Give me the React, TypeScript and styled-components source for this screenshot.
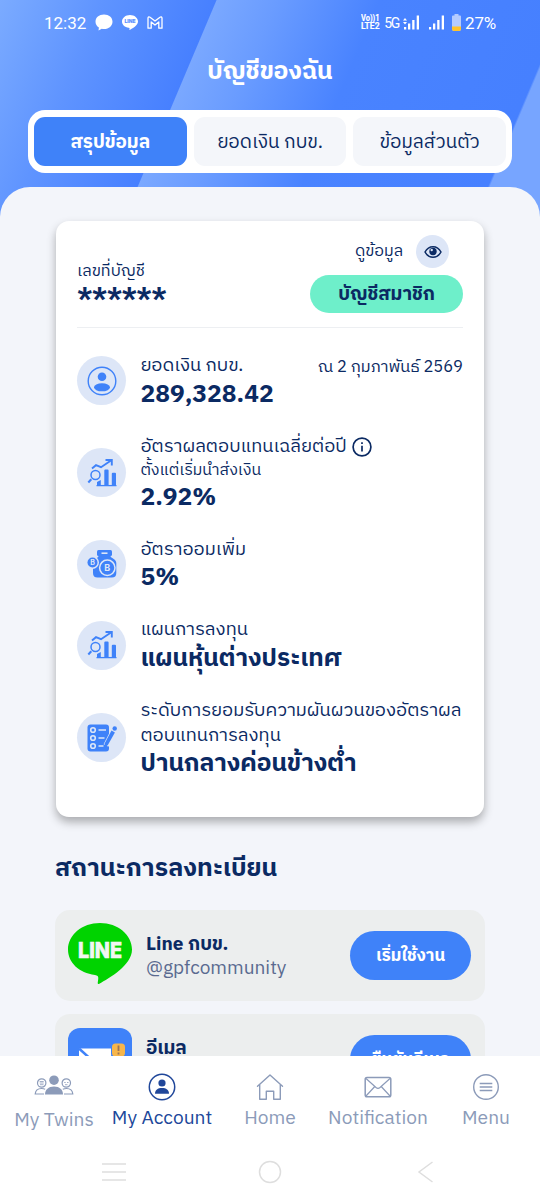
import React from 'react';
import styled, { createGlobalStyle } from 'styled-components';

const navy = '#0b2a63';
const blue = '#3f82f9';
const grey = '#8c9bb9';
const pale = '#dde6f7';

const Global = createGlobalStyle`
  * { box-sizing: border-box; }
  body { margin: 0; background: #f3f5fa; }
`;

const Screen = styled.main`
  width: 540px;
  height: 1199px;
  overflow: hidden;
  display: flex;
  flex-direction: column;
  font-family: 'IBM Plex Sans Thai', 'Noto Sans', 'Noto Sans Thai', sans-serif;
  color: ${navy};
  background: linear-gradient(112.9deg, #7babff 0, #5f94ff 95px, #4780ff 199px, #7aa8ff 200px, #6a9cff 255px, #4983ff 350px, #4680ff 522px, #77a5ff 524px, #77a5ff 100%) 0 0 / 540px 217px no-repeat;
`;

const Text = styled.span<{ $size: number; $line?: number; $weight?: number; $spacing?: number; $color?: string }>`
  display: block;
  white-space: nowrap;
  font-size: ${p => p.$size}px;
  line-height: ${p => p.$line ?? 24}px;
  font-weight: ${p => p.$weight ?? 400};
  letter-spacing: ${p => p.$spacing ?? 0}px;
  color: ${p => p.$color ?? 'inherit'};
`;

const StatusBar = styled.div`
  height: 44px;
  flex: none;
  padding: 0 44px 0;
  display: flex;
  align-items: center;
  justify-content: space-between;
`;
const StatusGroup = styled.div<{ $gap: number }>`
  display: flex;
  align-items: center;
  gap: ${p => p.$gap}px;
`;
const StatusText = styled(Text)`
  font-family: Roboto, sans-serif;
  padding-top: 1px;
`;
const Title = styled.header`
  height: 66px;
  flex: none;
  display: flex;
  justify-content: center;
  padding-top: 16px;
`;
const Tabs = styled.nav`
  flex: none;
  margin: 0 28px;
  height: 63px;
  padding: 7px 6px;
  display: grid;
  grid-template-columns: repeat(3, 1fr);
  gap: 7px;
  background: #fff;
  border-radius: 17px;
`;
const Tab = styled.button<{ $active?: boolean }>`
  border: 0;
  padding: 2px 0 0;
  font-family: inherit;
  display: flex;
  align-items: center;
  justify-content: center;
  border-radius: 11px;
  color: ${p => (p.$active ? '#fff' : navy)};
  background: ${p => (p.$active ? blue : '#f4f6fa')};
`;
const Sheet = styled.section`
  flex: 1;
  min-height: 0;
  overflow: hidden;
  margin-top: 14px;
  padding: 34px 56px 0;
  border-radius: 30px 30px 0 0;
  background: #f3f5fa;
`;
const Card = styled.article`
  height: 596px;
  padding: 14px 21px 0;
  border-radius: 13px;
  background: #fff;
  box-shadow: 0 5px 10px rgba(0, 0, 0, 0.3);
`;
const CardHead = styled.div`
  height: 93px;
  display: flex;
  justify-content: space-between;
  border-bottom: 1px solid #edeff2;
`;
const Account = styled.div`
  padding-top: 25px;
`;
const HeadRight = styled.div`
  display: flex;
  flex-direction: column;
  align-items: flex-end;
  gap: 7px;
`;
const Reveal = styled.div`
  display: flex;
  align-items: center;
  gap: 13px;
  padding-right: 14px;
`;
const Circle = styled.div<{ $size: number; $lift?: number }>`
  flex: none;
  width: ${p => p.$size}px;
  height: ${p => p.$size}px;
  margin-bottom: ${p => p.$lift ?? 0}px;
  border-radius: 50%;
  color: ${blue};
  background: ${pale};
  display: flex;
  align-items: center;
  justify-content: center;
`;
const Pill = styled.div`
  width: 153px;
  height: 38px;
  padding-top: 2px;
  border-radius: 19px;
  display: flex;
  align-items: center;
  justify-content: center;
  background: #6eefca;
`;
const Items = styled.div`
  display: flex;
  flex-direction: column;
  gap: 24.2px;
  padding-top: 26.4px;
`;
const Item = styled.div`
  display: flex;
  align-items: center;
  gap: 14.4px;
`;
const ItemText = styled.div`
  flex: 1;
`;
const Line = styled.div`
  display: flex;
  justify-content: space-between;
  align-items: center;
`;
const DateText = styled(Text)`
  padding-top: 1px;
  margin-bottom: -1px;
`;
const WithInfo = styled.div`
  display: flex;
  align-items: center;
  gap: 5px;
`;
const Heading = styled.h2`
  margin: 36px 0 25px -1px;
`;
const Service = styled.div`
  height: 91px;
  margin: 0 -1px 13px;
  padding: 0 14px 0 13px;
  display: flex;
  align-items: center;
  border-radius: 15px;
  background: #eceeee;
`;
const Logo = styled.div<{ $lift: number }>`
  display: flex;
  margin-bottom: ${p => p.$lift}px;
`;
const ServiceText = styled.div`
  flex: 1;
  margin-left: 14px;
  padding-top: 2px;
`;
const Action = styled.button`
  width: 121px;
  height: 49px;
  border: 0;
  padding: 0;
  border-radius: 25px;
  background: ${blue};
  font-family: inherit;
  display: flex;
  align-items: center;
  justify-content: center;
`;
const BottomNav = styled.nav`
  flex: none;
  height: 88px;
  background: #fff;
  display: grid;
  grid-template-columns: repeat(5, 1fr);
  padding-top: 17px;
`;
const NavItem = styled.div<{ $active?: boolean; $drop?: number }>`
  display: flex;
  flex-direction: column;
  align-items: center;
  gap: ${p => 6 + (p.$drop ?? 0)}px;
  color: ${p => (p.$active ? '#20479a' : grey)};
`;
const SystemNav = styled.div`
  flex: none;
  height: 55px;
  background: #fff;
  display: grid;
  grid-template-columns: 1fr 1fr 1fr;
  justify-items: center;
  padding: 16px 36px 0;
`;

const UserIcon = () => (
  <svg width="30" height="30" viewBox="0 0 30 30" fill="none" stroke="currentColor">
    <circle cx="15" cy="15" r="13.8" strokeWidth="1.4" />
    <circle cx="15" cy="10.7" r="4.3" fill="currentColor" stroke="none" />
    <ellipse cx="15" cy="21.3" rx="8" ry="4" fill="currentColor" stroke="none" />
  </svg>
);
const AccountIcon = () => (
  <svg width="28" height="28" viewBox="0 0 28 28" fill="none">
    <circle cx="14" cy="14" r="12.7" stroke="currentColor" strokeWidth="1.5" />
    <circle cx="14" cy="10" r="3.6" fill="currentColor" />
    <path d="M7 20.7c0-3.8 2.8-5.7 7-5.7s7 1.900 7 5.700z" fill="currentColor" />
  </svg>
);
const ChartIcon = () => (
  <svg width="30" height="30" viewBox="0 0 30 30" fill="none" stroke="currentColor">
    <path d="M5 10.500l4-3.300 5 2L24 2.500" strokeWidth="1.900" />
    <path d="M18.500 2h6.300v5.500" strokeWidth="1.900" />
    <circle cx="8.500" cy="17" r="4.500" strokeWidth="1.500" />
    <path d="M4.300 21.300l-3 3.200" strokeWidth="2.100" />
    <path d="M9.500 27.600h20" strokeWidth="1.300" />
    <path d="M10 27.500v-3.500l3.800-2v5.500zM17.300 27.500V12.500q0-1 1-1h2.300q1 0 1 1v15zM24.800 27.500V15.700q0-1 1-1h2.200q1 0 1 1v11.800z" fill="currentColor" stroke="none" />
  </svg>
);
const JarIcon = () => (
  <svg width="30" height="30" viewBox="0 0 30 30">
    <rect x="10" y="1" width="15" height="6" rx="1.500" fill={blue} />
    <path d="M11.500 7h12c0 2 5.800 3 5.800 7v10c0 3-1.500 4.500-4.500 4.500H10.500c-3 0-4.500-1.500-4.500-4.500V14c0-4 5.500-5 5.500-7z" fill={blue} />
    <path d="M14.500 4.200h6" stroke={pale} strokeWidth="1.600" />
    <circle cx="5.500" cy="13.500" r="6.500" fill={pale} />
    <circle cx="5.500" cy="13.500" r="5" fill={blue} />
    <circle cx="20.300" cy="18.800" r="7.700" fill={blue} stroke={pale} strokeWidth="1.500" />
    <g fill={pale} fontFamily="Inter, sans-serif" fontWeight="700" textAnchor="middle">
      <text x="5.500" y="16" fontSize="7">B</text>
      <text x="20.300" y="22" fontSize="9">B</text>
    </g>
  </svg>
);
const ChecklistIcon = () => (
  <svg width="32" height="30" viewBox="0 0 32 30" fill="none">
    <rect x="1.500" y="1.500" width="21.500" height="27" rx="3" fill={blue} />
    <g stroke={pale} strokeWidth="1.600">
      <circle cx="7" cy="7" r="2.300" />
      <circle cx="7" cy="15" r="2.300" />
      <circle cx="7" cy="23" r="2.300" />
      <path d="M12.500 7h7.500M12.500 15h6M12.500 23h5" />
    </g>
    <path d="M27.500 8l-7.500 14.500" stroke={pale} strokeWidth="5.500" />
    <path d="M25.500 7.500l3.400 1.900-7 12.700-3.400 2.800.3-4.700z" fill={blue} />
    <circle cx="28.700" cy="5.500" r="2.200" fill={blue} />
  </svg>
);
const EyeIcon = () => (
  <svg width="18" height="14" viewBox="0 0 18 14">
    <path d="M1 7c2-3.700 4.800-5.300 8-5.300s6 1.600 8 5.300c-2 3.700-4.800 5.300-8 5.300S3 10.700 1 7z" fill="none" stroke={navy} strokeWidth="1.500" />
    <circle cx="9" cy="6.500" r="3.700" fill={navy} />
    <circle cx="7.700" cy="5" r="1.200" fill={pale} />
  </svg>
);
const InfoIcon = () => (
  <svg width="20" height="20" viewBox="0 0 20 20" fill="none" stroke={navy}>
    <circle cx="10" cy="10" r="8.900" strokeWidth="1.700" />
    <path d="M10 8.800v5.700M10 5.300v1.800" strokeWidth="1.700" />
  </svg>
);
const LineBubble = ({ width, height, fill, ink }: { width: number; height: number; fill: string; ink: string }) => (
  <svg width={width} height={height} viewBox="0 0 64 61" preserveAspectRatio="none">
    <path d="M32 0C14 0 0 12 0 26.500 0 39.500 11 50 27 52c3 .5 3.500 1.500 3.200 4.300L29.700 60c0 1 .7 1.200 1.600.7C41 55.500 64 42 64 26.500 64 12 50 0 32 0z" fill={fill} />
    <text x="32" y="34.500" textAnchor="middle" fontFamily="Inter, sans-serif" fontWeight="800" fontSize="22" textLength="44" lengthAdjust="spacingAndGlyphs" fill={ink} stroke={ink} strokeWidth=".6">LINE</text>
  </svg>
);
const MailTile = () => (
  <svg width="64" height="62" viewBox="0 0 64 62">
    <rect width="64" height="62" rx="12" fill={blue} />
    <path d="M11 20.500h42v29H11z" fill="#fff" />
    <path d="M11 20.500l21 19 21-19" fill="none" stroke={blue} strokeWidth="2.500" />
    <rect x="43" y="14.500" width="15" height="15" rx="4" fill={blue} />
    <rect x="44" y="15.500" width="13" height="13" rx="3.500" fill="#f7b64b" />
    <path d="M50.500 17.500v5.500M50.500 24.500v2" stroke="#9b7355" strokeWidth="1.800" />
  </svg>
);
const ChatIcon = () => (
  <svg width="18" height="17" viewBox="0 0 18 17" fill="#fff">
    <path d="M9 .5c5 0 8.500 3.100 8.500 7.200S14 15 9 15c-.8 0-1.500 0-2.200-.2L3.500 16.500l.4-3C1.800 12.200.5 10.200.5 7.700.5 3.600 4 .5 9 .5z" />
  </svg>
);
const GmailIcon = () => (
  <svg width="16" height="13" viewBox="0 0 16 13" fill="none" stroke="#fff" strokeWidth="1.300" strokeLinejoin="round">
    <path d="M1 12.200V2Q1.500.2 3 1.200L8 5l5-3.800q1.500-1 2 .8v10.200h-3.200V6L8 9 4.200 6v6.200z" />
  </svg>
);
const Bars = ({ data }: { data?: boolean }) => (
  <svg width="17" height="15" viewBox="0 0 17 15" fill="#fff">
    <path d="M1 12h2.200v2.500H1zM5 8.500h2.300v6H5zM9.200 5h2.300v9.500H9.200zM13.700.5H16v14h-2.300z" />
    {data && <path d="M0 5.500L2 3l2 2.500zM0 7L2 9.500 4 7z" />}
  </svg>
);
const VolteIcon = () => (
  <svg width="19" height="16" viewBox="0 0 19 16" fill="#fff" stroke="#fff" strokeWidth=".2" fontFamily="Roboto, sans-serif" fontWeight="600" fontSize="8.500">
    <text x="0" y="7" textLength="18.500" lengthAdjust="spacingAndGlyphs">Vo))1</text>
    <text x="0" y="14.800" textLength="18.500" lengthAdjust="spacingAndGlyphs">LTE2</text>
  </svg>
);
const BatteryIcon = () => (
  <svg width="9" height="17" viewBox="0 0 9 17">
    <path d="M2.500 0h4v1.500H8q1 0 1 1V15q0 2-2 2H2q-2 0-2-2V2.500q0-1 1-1h1.500z" fill="#b4cbff" />
    <path d="M0 12.500h9V15q0 2-2 2H2q-2 0-2-2z" fill="#ffc32b" />
  </svg>
);
const TwinsIcon = () => (
  <svg width="40" height="28" viewBox="0 0 40 28" fill="none" stroke="currentColor" strokeWidth="1.200">
    <circle cx="20" cy="7.200" r="4.800" fill="currentColor" stroke="none" />
    <path d="M11 21.500c0-5 3.500-8 9-8s9 3 9 8z" fill="currentColor" stroke="none" />
    <circle cx="7.700" cy="10" r="4.200" />
    <circle cx="32.300" cy="10" r="4.200" />
    <path d="M10 21H1.200c.3-3.800 2.500-5.500 6.300-5.500 1.500 0 2.700.3 3.700.8M30 21h8.800c-.3-3.800-2.500-5.500-6.300-5.500-1.500 0-2.700.3-3.700.8" />
    <path d="M5.700 8.500h4M5.700 10h4M6 11.700h3.500M30.200 9.500h1.500M33 9.500h1.500M31 11.700h2.500" strokeWidth=".8" />
  </svg>
);
const HomeIcon = () => (
  <svg width="28" height="28" viewBox="0 0 28 28" fill="none" stroke="currentColor" strokeWidth="1.400" strokeLinejoin="round" strokeLinecap="round">
    <path d="M1.500 13.300L14 2l12.500 11.300M3.700 11.500V26.300h6.600v-8h7.400v8h6.600V11.500" />
  </svg>
);
const EnvelopeIcon = () => (
  <svg width="28" height="28" viewBox="0 0 28 28" fill="none" stroke="currentColor" strokeWidth="1.500">
    <rect x="1.200" y="4.500" width="25.600" height="19.300" rx="1.800" />
    <path d="M2 5.500l10 9q2 1.700 4 0l10-9M2 23l8.800-9.500M26 23l-8.800-9.500" strokeWidth="1.200" />
  </svg>
);
const MenuIcon = () => (
  <svg width="28" height="28" viewBox="0 0 28 28" fill="none" stroke="currentColor" strokeWidth="1.400">
    <circle cx="14" cy="14" r="12.300" />
    <path d="M7.700 10.500h12.600M7.700 14h12.600M7.700 17.500h12.600" />
  </svg>
);

type Entry = { icon: React.ReactNode; labels: string[]; value: string; date?: string; info?: boolean; sub?: string };

const items: Entry[] = [
  { icon: <UserIcon />, labels: ['ยอดเงิน กบข.'], value: '289,328.42', date: 'ณ 2 กุมภาพันธ์ 2569' },
  { icon: <ChartIcon />, labels: ['อัตราผลตอบแทนเฉลี่ยต่อปี'], info: true, sub: 'ตั้งแต่เริ่มนำส่งเงิน', value: '2.92%' },
  { icon: <JarIcon />, labels: ['อัตราออมเพิ่ม'], value: '5%' },
  { icon: <ChartIcon />, labels: ['แผนการลงทุน'], value: 'แผนหุ้นต่างประเทศ' },
  { icon: <ChecklistIcon />, labels: ['ระดับการยอมรับความผันผวนของอัตราผล', 'ตอบแทนการลงทุน'], value: 'ปานกลางค่อนข้างต่ำ' },
];

export default function App() {
  return (
    <Screen>
      <Global />
      <StatusBar>
        <StatusGroup $gap={9}>
          <StatusText $size={17} $color="#fff">12:32</StatusText>
          <ChatIcon />
          <LineBubble width={16} height={15} fill="#fff" ink="#5c90ff" />
          <GmailIcon />
        </StatusGroup>
        <StatusGroup $gap={4}>
          <VolteIcon />
          <StatusText $size={14} $color="#fff" $spacing={-1.3}>5G</StatusText>
          <StatusGroup $gap={7.5}>
            <Bars data />
            <Bars />
            <BatteryIcon />
          </StatusGroup>
          <StatusText $size={17} $color="#fff" $spacing={-0.2}>27%</StatusText>
        </StatusGroup>
      </StatusBar>
      <Title><Text $size={24.8} $weight={700} $color="#fff">บัญชีของฉัน</Text></Title>
      <Tabs>
        <Tab $active><Text $size={19} $weight={700}>สรุปข้อมูล</Text></Tab>
        <Tab><Text $size={19}>ยอดเงิน กบข.</Text></Tab>
        <Tab><Text $size={19}>ข้อมูลส่วนตัว</Text></Tab>
      </Tabs>
      <Sheet>
        <Card>
          <CardHead>
            <Account>
              <Text $size={16.4}>เลขที่บัญชี</Text>
              <Text $size={26} $weight={700} $line={30} $spacing={-0.8}>******</Text>
            </Account>
            <HeadRight>
              <Reveal>
                <Text $size={16.2}>ดูข้อมูล</Text>
                <Circle $size={33}><EyeIcon /></Circle>
              </Reveal>
              <Pill><Text $size={19} $weight={700}>บัญชีสมาชิก</Text></Pill>
            </HeadRight>
          </CardHead>
          <Items>
            {items.map(it => (
              <Item key={it.value}>
                <Circle $size={49} $lift={3.4}>{it.icon}</Circle>
                <ItemText>
                  {it.labels.map(label => (
                    <Line key={label}>
                      <WithInfo>
                        <Text $size={18.5} $line={24.5}>{label}</Text>
                        {it.info && <InfoIcon />}
                      </WithInfo>
                      {it.date && <DateText $size={16.5}>{it.date}</DateText>}
                    </Line>
                  ))}
                  {it.sub && <Text $size={16} $line={22}>{it.sub}</Text>}
                  <Text $size={24.6} $line={32} $weight={700}>{it.value}</Text>
                </ItemText>
              </Item>
            ))}
          </Items>
        </Card>
        <Heading><Text $size={25} $line={32} $weight={700}>สถานะการลงทะเบียน</Text></Heading>
        <Service>
          <Logo $lift={4}><LineBubble width={64} height={61} fill="#00d300" ink="#f2f6f2" /></Logo>
          <ServiceText>
            <Text $size={19} $weight={700}>Line กบข.</Text>
            <Text $size={19.1} $color="#5a6a90">@gpfcommunity</Text>
          </ServiceText>
          <Action><Text $size={17} $weight={700} $color="#fff">เริ่มใช้งาน</Text></Action>
        </Service>
        <Service>
          <Logo $lift={1}><MailTile /></Logo>
          <ServiceText>
            <Text $size={19} $weight={700}>อีเมล</Text>
            <Text $size={19} $color="#5a6a90">ยังไม่ยืนยัน</Text>
          </ServiceText>
          <Action><Text $size={17} $weight={700} $color="#fff">ยืนยันอีเมล</Text></Action>
        </Service>
      </Sheet>
      <BottomNav>
        <NavItem $drop={2}><TwinsIcon /><Text $size={19.2}>My Twins</Text></NavItem>
        <NavItem $active><AccountIcon /><Text $size={19.2}>My Account</Text></NavItem>
        <NavItem><HomeIcon /><Text $size={19.2}>Home</Text></NavItem>
        <NavItem><EnvelopeIcon /><Text $size={19.2}>Notification</Text></NavItem>
        <NavItem><MenuIcon /><Text $size={19.2}>Menu</Text></NavItem>
      </BottomNav>
      <SystemNav>
        <svg width="26" height="24" viewBox="0 0 26 24" stroke="#dedede" strokeWidth="1.600"><path d="M1 4h24M1 12h24M1 20h24" /></svg>
        <svg width="24" height="24" viewBox="0 0 24 24" fill="none" stroke="#dedede" strokeWidth="1.500"><circle cx="12" cy="12" r="10.500" /></svg>
        <svg width="24" height="24" viewBox="0 0 24 24" fill="none" stroke="#dedede" strokeWidth="1.500"><path d="M18.500 2L5 12l13.500 10" /></svg>
      </SystemNav>
    </Screen>
  );
}
